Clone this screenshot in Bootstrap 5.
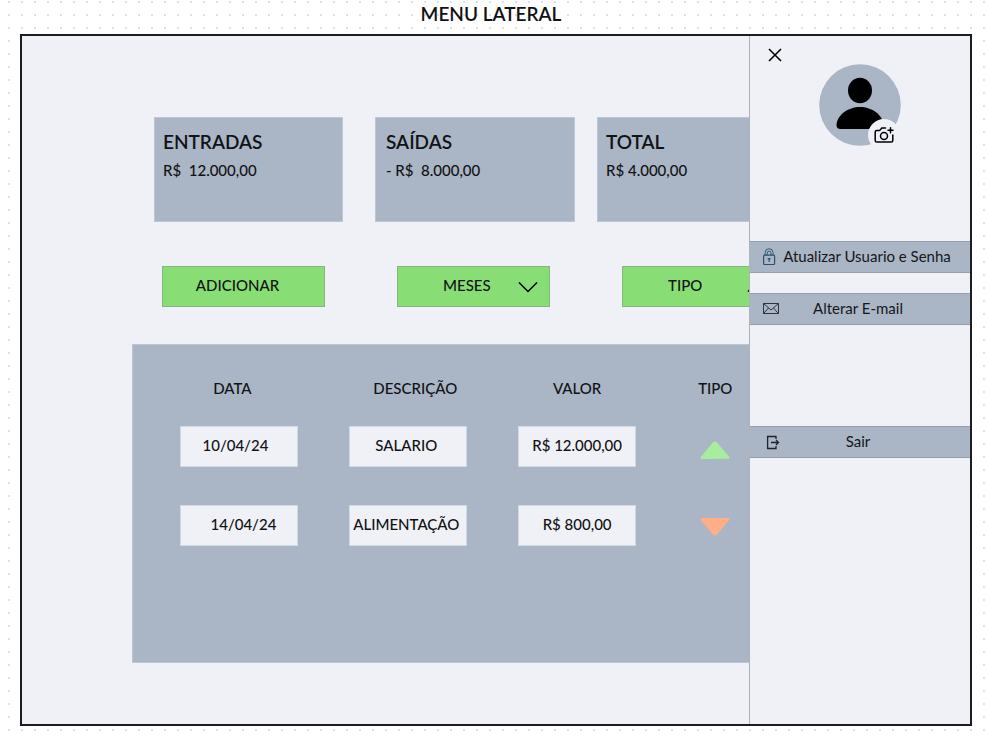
<!DOCTYPE html>
<html lang="pt-BR">
<head>
<meta charset="utf-8">
<meta name="viewport" content="width=device-width, initial-scale=1">
<title>Menu lateral</title>
<link href="https://cdn.jsdelivr.net/npm/bootstrap@5.3.0/dist/css/bootstrap.min.css" rel="stylesheet">
<style>
:root { --steel: #aab5c5; --mist: #f0f1f6; --leaf: #88de74; --ink: #111214; }
body {
  font-family: Lato, "Open Sans", sans-serif;
  font-size: 15px; font-weight: 500; line-height: 20px; color: var(--ink);
  background: conic-gradient(from 90deg at 11px 11px, #dedfe9 25%, #fff 0) 10px 3px / 13px 13px;
}
.page-title { font-size: 19px; font-weight: 600; line-height: 28px; height: 34px; }
.screen { margin: 0 14px 9px 20px; border: 2px solid #1c1d20; background: var(--mist); }
.summary { display: grid; grid-template-columns: 189fr 200fr 190fr; column-gap: 27px; padding: 81px 183px 0 132px; }
.stat { background: var(--steel); border: 1px solid #bcc6d4; height: 105px; padding: 10px 8px; }
.stat:nth-child(2) { margin-left: 5px; margin-right: -5px; padding-left: 10px; }
.stat h2 { font-size: 19px; font-weight: 600; line-height: 28px; margin: 0; }
.stat p { margin: 0; line-height: 28px; white-space: pre; }
.actions { display: grid; grid-template-columns: 163fr 153fr 157fr; column-gap: 72px; padding: 44px 191px 0 140px; }
.action {
  height: 41px; border: 1px solid #86b583; border-radius: 0; background-color: var(--leaf);
  color: var(--ink); font-size: 15px; font-weight: 500; line-height: 20px; padding: 0 0 3px;
}
.action:hover { background-color: #7bd466; color: var(--ink); }
.add { padding-right: 12px; }
.pick {
  appearance: none; padding-left: 45px;
  background-image: url("data:image/svg+xml,%3Csvg xmlns='http://www.w3.org/2000/svg' viewBox='0 0 20 12'%3E%3Cpath d='M1 1.500 10 10.500 19 1.500' fill='none' stroke='%23000' stroke-width='1.500'/%3E%3C/svg%3E");
  background-repeat: no-repeat; background-size: 20px 12px; background-position: right 11px center;
}
.pick-up { background-image: url("data:image/svg+xml,%3Csvg xmlns='http://www.w3.org/2000/svg' viewBox='0 0 20 12'%3E%3Cpath d='M1 10.500 10 1.500 19 10.500' fill='none' stroke='%23000' stroke-width='1.500'/%3E%3C/svg%3E"); }
.ledger { margin: 37px 182px 61px 110px; padding: 20px 18px 90px 22px; min-height: 319px; background: var(--steel); border: 1px solid #bcc6d4; }
.ledger table { width: 100%; table-layout: fixed; text-align: center; }
.ledger th { height: 42px; padding: 0 0 9px; font-weight: 500; vertical-align: bottom; }
.ledger th:nth-child(1) { padding-right: 14px; }
.ledger th:nth-child(2) { padding-left: 14px; }
.ledger td { height: 79px; padding: 0; }
.entry { width: 118px; height: 41px; line-height: 37px; margin: 0 auto; background: var(--mist); border: 1px solid #d3d9e3; white-space: nowrap; }
.drawer { width: 221px; background: var(--mist); border-left: 1px solid #aeb2ba; }
.drawer-head { display: grid; grid-template-columns: 1fr auto 1fr; padding-top: 7px; height: 205px; align-items: start; }
.close-btn { width: 24px; height: 24px; margin-left: 13px; line-height: 0; }
.avatar { width: 82px; height: 82px; margin-top: 21px; }
.camera { width: 32px; height: 32px; left: 49px; top: 55px; background: var(--mist); }
.menu-item {
  height: 32px; padding-left: 12px; background: var(--steel); border: solid #959eac; border-width: 1px 0;
  color: #16171a; font-weight: 400; text-decoration: none; white-space: nowrap;
}
.menu-item:hover { background: #9eaabc; }
.menu-item span { flex: 1; text-align: center; padding: 0 34px 3px 0; }
.menu-item .wide-label { padding-right: 16px; }
.menu-item svg { width: 18px; height: 18px; flex: none; }
.mail-item { margin-top: 20px; }
.exit-item { margin-top: 101px; }
</style>
</head>
<body class="min-vh-100 d-flex flex-column">
<h1 class="page-title text-center mb-0 pe-1">MENU LATERAL</h1>
<div class="screen position-relative overflow-hidden flex-grow-1">
  <main>
    <section class="summary">
      <div class="stat"><h2>ENTRADAS</h2><p>R$  12.000,00</p></div>
      <div class="stat"><h2>SAÍDAS</h2><p>- R$  8.000,00</p></div>
      <div class="stat"><h2>TOTAL</h2><p>R$ 4.000,00</p></div>
    </section>
    <div class="actions">
      <button type="button" class="btn action add">ADICIONAR</button>
      <select class="action pick" aria-label="Meses"><option>MESES</option></select>
      <select class="action pick pick-up" aria-label="Tipo"><option>TIPO</option></select>
    </div>
    <section class="ledger">
      <table>
        <colgroup><col style="width:27.5%"><col style="width:27.5%"><col style="width:27.5%"><col></colgroup>
        <thead><tr><th scope="col">DATA</th><th scope="col">DESCRIÇÃO</th><th scope="col">VALOR</th><th scope="col">TIPO</th></tr></thead>
        <tbody>
          <tr>
            <td><div class="entry pe-2">10/04/24</div></td>
            <td><div class="entry pe-1">SALARIO</div></td>
            <td><div class="entry">R$ 12.000,00</div></td>
            <td><svg width="30" height="26" viewBox="0 -6 30 26" role="img" aria-label="Entrada"><path d="M13 2.500q2-2 4 0L29 16.500q1.500 2-1 2.200L2 19Q-.5 19 1 16.800Z" fill="#a6ee9e"/></svg></td>
          </tr>
          <tr>
            <td><div class="entry ps-2">14/04/24</div></td>
            <td><div class="entry pe-1">ALIMENTAÇÃO</div></td>
            <td><div class="entry">R$ 800,00</div></td>
            <td><svg width="30" height="20" viewBox="0 0 30 20" role="img" aria-label="Saída"><path d="M13 17.500q2 2 4 0L29 3.500Q30.500 1 28 1H2Q-.5 1 1 3.500Z" fill="#ffae85"/></svg></td>
          </tr>
        </tbody>
      </table>
    </section>
  </main>
  <aside class="drawer position-absolute top-0 bottom-0 end-0">
    <div class="drawer-head">
      <button type="button" class="btn close-btn border-0 p-0" aria-label="Fechar"><svg width="14" height="14" viewBox="0 0 14 14"><path d="m1 1 12 12M13 1 1 13" stroke="#000" stroke-width="1.600"/></svg></button>
      <div class="avatar position-relative">
        <svg width="82" height="82" viewBox="0 0 82 82" aria-hidden="true"><circle cx="41" cy="41" r="40.800" fill="#aab5c5"/><ellipse cx="41" cy="26.500" rx="12" ry="12.800"/><path d="M17.500 61C18 51 29 43 41 43s23 8 23.500 18q0 4-4 4h-39q-4 0-4-4Z"/></svg>
        <button type="button" class="camera btn border-0 rounded-circle position-absolute p-0 d-flex align-items-center justify-content-center" aria-label="Alterar foto">
          <svg width="20" height="18" viewBox="0 0 20 18" fill="none" stroke="#000" stroke-width="1.500" stroke-linecap="round" stroke-linejoin="round"><path d="M11.500 2H8.200q-.8 0-1.200.8l-.5.900q-.4.700-1.200.7H2.800Q1.200 4.400 1.200 6v8.500q0 1.600 1.600 1.600h14.400q1.600 0 1.600-1.600V9M16.500 1.700v5M14 4.200h5"/><circle cx="10" cy="10" r="3.500"/></svg>
        </button>
      </div>
    </div>
    <nav>
      <a href="#" class="menu-item d-flex align-items-center"><svg viewBox="0 0 18 18" fill="none" stroke="#28536f" stroke-width="1.200"><rect x="1.600" y="7.200" width="11" height="9.300" rx="1"/><path d="M3.200 7V4.600a3.900 3.900 0 0 1 7.800 0V7M5.200 7V5a1.900 1.900 0 0 1 3.800 0v2" stroke-width=".9"/><path d="M7.100 10.500V14M5.600 10.600h3"/></svg><span class="wide-label">Atualizar Usuario e Senha</span></a>
      <a href="#" class="menu-item mail-item d-flex align-items-center"><svg viewBox="0 0 18 18" fill="none" stroke="#30343b"><path d="M1.500 3.500h15v10h-15ZM1.500 3.500 9 10l7.500-6.500M1.500 13.500 6.500 8M16.500 13.500 11.500 8"/></svg><span>Alterar E-mail</span></a>
      <a href="#" class="menu-item exit-item d-flex align-items-center"><svg viewBox="0 0 18 18" fill="none" stroke="#202329" stroke-width="1.300"><path d="M14 6V3.500H5.600v12H14V13M9 9.500h7.500M14 7l2.500 2.500L14 12"/></svg><span>Sair</span></a>
    </nav>
  </aside>
</div>
<script src="https://cdn.jsdelivr.net/npm/bootstrap@5.3.0/dist/js/bootstrap.bundle.min.js"></script>
</body>
</html>
